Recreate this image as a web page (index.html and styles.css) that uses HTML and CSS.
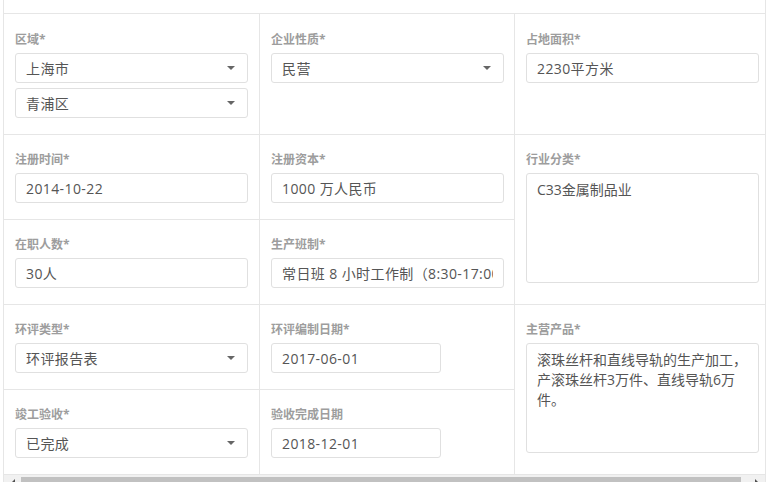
FILE: index.html
```html
<!DOCTYPE html>
<html lang="zh-CN">
<head>
<meta charset="utf-8">
<title>企业信息</title>
<link rel="stylesheet" href="styles.css">
</head>
<body>
<div class="sheet">
  <div class="top"></div>
  <div class="grid">
    <div class="cell r1 c1">
      <label class="lbl">区域*</label>
      <div class="sel"><select class="field"><option>上海市</option></select></div>
      <div class="sel gap"><select class="field"><option>青浦区</option></select></div>
    </div>
    <div class="cell r1 c2">
      <label class="lbl">企业性质*</label>
      <div class="sel"><select class="field"><option>民营</option></select></div>
    </div>
    <div class="cell r1 c3">
      <label class="lbl">占地面积*</label>
      <input class="field" type="text" value="2230平方米">
    </div>

    <div class="cell c1">
      <label class="lbl">注册时间*</label>
      <input class="field" type="text" value="2014-10-22">
    </div>
    <div class="cell c2">
      <label class="lbl">注册资本*</label>
      <input class="field" type="text" value="1000 万人民币">
    </div>
    <div class="cell c3 span2">
      <label class="lbl">行业分类*</label>
      <textarea class="field area">C33金属制品业</textarea>
    </div>

    <div class="cell c1">
      <label class="lbl">在职人数*</label>
      <input class="field" type="text" value="30人">
    </div>
    <div class="cell c2">
      <label class="lbl">生产班制*</label>
      <input class="field" type="text" value="常日班 8 小时工作制（8:30-17:00）">
    </div>

    <div class="cell c1">
      <label class="lbl">环评类型*</label>
      <div class="sel"><select class="field"><option>环评报告表</option></select></div>
    </div>
    <div class="cell c2">
      <label class="lbl">环评编制日期*</label>
      <input class="field short" type="text" value="2017-06-01">
    </div>
    <div class="cell c3 span2">
      <label class="lbl">主营产品*</label>
      <textarea class="field area">滚珠丝杆和直线导轨的生产加工，产滚珠丝杆3万件、直线导轨6万件。</textarea>
    </div>

    <div class="cell c1">
      <label class="lbl">竣工验收*</label>
      <div class="sel"><select class="field"><option>已完成</option></select></div>
    </div>
    <div class="cell c2">
      <label class="lbl">验收完成日期</label>
      <input class="field short" type="text" value="2018-12-01">
    </div>
  </div>
  <div class="hscroll">
    <div class="btn"><span class="arr-l"></span></div>
    <div class="thumb"></div>
    <div class="track"></div>
    <div class="btn"><span class="arr-r"></span></div>
  </div>
</div>
</body>
</html>
```

FILE: styles.css
```css
* { box-sizing: border-box; }

html, body {
  margin: 0;
  padding: 0;
  overflow: hidden;
  background: #fff;
}

body {
  font-family: "Open Sans", "Noto Sans CJK SC", sans-serif;
  color: #555;
}

.sheet {
  margin-left: 3px;
  width: 763px;
  border-left: 1px solid #e6e6e6;
  border-right: 1px solid #e6e6e6;
}

.top {
  height: 14px;
  border-bottom: 1px solid #e6e6e6;
}

.grid {
  display: grid;
  grid-template-columns: 255px 255px 251px;
  grid-template-rows: 121px 85px 85px 85px 85px;
}

.cell {
  padding: 15px 0 0 11px;
  border-bottom: 1px solid #e6e6e6;
}

.r1 { padding-top: 16px; }

.c2, .c3 { border-left: 1px solid #e6e6e6; }

.c1 { grid-column: 1; }
.c2 { grid-column: 2; }
.c3 { grid-column: 3; }
.span2 { grid-row: span 2; }

.lbl {
  display: block;
  font-size: 12px;
  font-weight: bold;
  color: #9d9d9d;
  line-height: 20px;
  margin-bottom: 3px;
}

.field {
  display: block;
  width: 233px;
  height: 30px;
  margin: 0;
  border: 1px solid #e0e0e0;
  border-radius: 3px;
  padding: 0 10px;
  font-family: "Open Sans", "Noto Sans CJK SC", sans-serif;
  font-size: 14px;
  letter-spacing: 0.4px;
  color: #555;
  background: #fff;
  outline: none;
}

.field.short { width: 170px; }

select.field {
  -webkit-appearance: none;
  appearance: none;
}

.sel {
  position: relative;
  width: 233px;
}

.sel.gap { margin-top: 5px; }

.sel::after {
  content: "";
  position: absolute;
  right: 13px;
  top: 13px;
  border-left: 4px solid transparent;
  border-right: 4px solid transparent;
  border-top: 4px solid #666;
  pointer-events: none;
}

.field.area {
  height: 110px;
  padding: 6px 10px;
  line-height: 20px;
  letter-spacing: 0;
  resize: none;
  overflow: hidden;
}

.hscroll {
  display: flex;
  height: 15px;
  background: #f1f1f1;
}

.btn {
  width: 17px;
  display: flex;
  justify-content: center;
  padding-top: 4px;
}

.thumb {
  width: 720px;
  margin-top: 2px;
  height: 11px;
  background: #c1c1c1;
}

.track { width: 7px; }

.arr-l, .arr-r {
  width: 0;
  height: 0;
  border-top: 4px solid transparent;
  border-bottom: 4px solid transparent;
}

.arr-l { border-right: 4px solid #505050; }
.arr-r { border-left: 4px solid #505050; }
```
